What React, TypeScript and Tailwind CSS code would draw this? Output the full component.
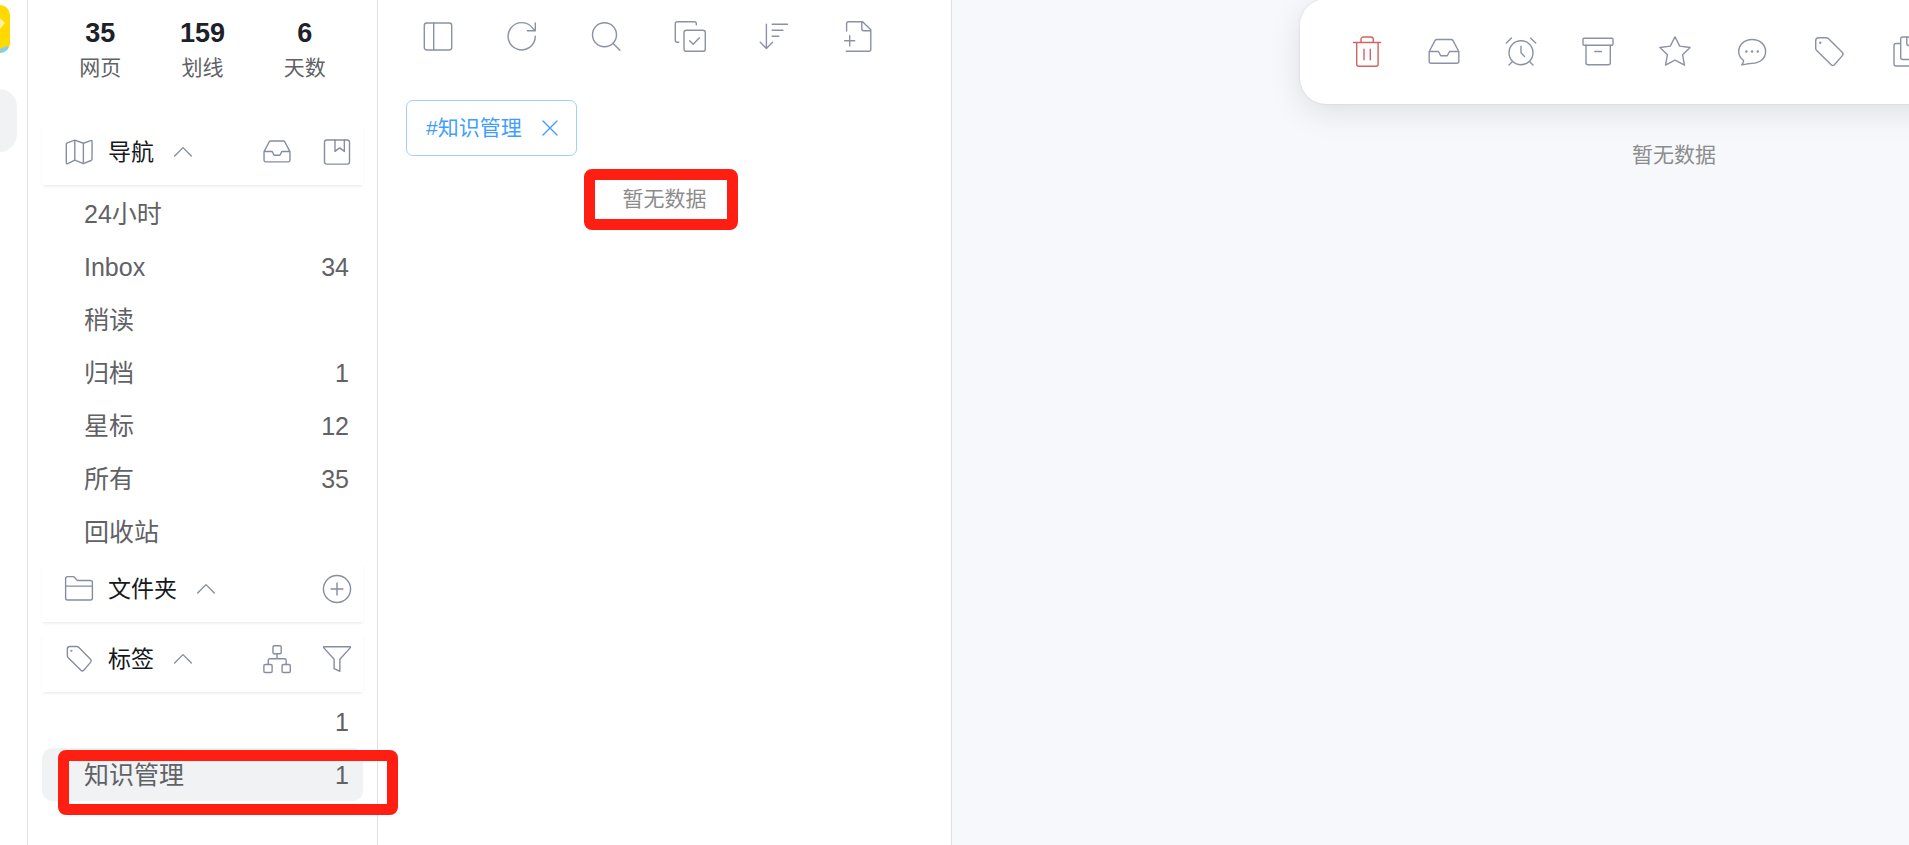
import type { ReactNode } from 'react'

interface NavItem {
  label: string
  count?: number
}

interface Action {
  label: string
  icon: ReactNode
}

const stats = [
  { value: 35, label: '网页' },
  { value: 159, label: '划线' },
  { value: 6, label: '天数' },
]

const navItems: NavItem[] = [
  { label: '24小时' },
  { label: 'Inbox', count: 34 },
  { label: '稍读' },
  { label: '归档', count: 1 },
  { label: '星标', count: 12 },
  { label: '所有', count: 35 },
  { label: '回收站' },
]

// Icon shapes, all drawn on a 32x32 grid
const inboxShape = (
  <path d="M1.2 15.5 7 4.6q.6-1.1 1.8-1.1h14.4q1.2 0 1.8 1.1l5.8 10.9v9.8q0 2-2 2H3.2q-2 0-2-2zh9.3l2.2 4.2h6.6l2.2-4.2h9.3" />
)

const tagShape = (
  <>
    <path d="M2.7 4.7q0-3 3-3h7.6q1.3 0 2.3 1l13.6 13.5q1.6 1.6.2 3.4l-8 9.2q-1.6 1.6-3.2 0L3.7 14.6q-1-1-1-2.3z" />
    <circle cx="7.3" cy="6.7" r="0.5" />
  </>
)

const listActions: Action[] = [
  {
    label: '侧边栏',
    icon: (
      <>
        <rect x="2.3" y="3" width="27.4" height="27" rx="2.4" />
        <path d="M11.7 3v27" />
      </>
    ),
  },
  {
    label: '刷新',
    icon: <path d="M29.3 16.3A13.6 13.6 0 1 1 27 8.7l2.3 2M29.3 3v7.7h-8" />,
  },
  {
    label: '搜索',
    icon: (
      <>
        <circle cx="14.5" cy="14.8" r="12" />
        <path d="m22.9 23.3 7 7" />
      </>
    ),
  },
  {
    label: '多选',
    icon: (
      <>
        <path d="M22.3 4.8V3.7q0-2-2-2h-17q-2 0-2 2v16.6q0 2 2 2h1.4" />
        <rect x="10" y="10.3" width="21.3" height="21" rx="2.4" />
        <path d="m15.7 20.7 3.5 3.5 6.2-6.5" />
      </>
    ),
  },
  {
    label: '排序',
    icon: <path d="M8.4 4.3v24.2M2.3 22.3l6.1 6.2 6.2-6.2M14.2 4.3h15.2M14.2 10.3H25M14.2 16.3h6.6" />,
  },
  {
    label: '新建',
    icon: (
      <path d="M4.6 11V3.7q0-2 2-2h14l8.2 8v19.6q0 2-2 2H4.3M19.8 1.7v7q0 2 2 2h7M7.7 15.7v10M2.7 20.7h10" />
    ),
  },
]

const articleActions: Action[] = [
  {
    label: '删除',
    icon: (
      <path d="M2.5 6.5h27M10 6.5v-3q0-2.5 2.5-2.5h7.4q2.4 0 2.4 2.5v3M5.7 6.5v21.8q0 2 2 2h17.4q2 0 2-2V6.5M13 13.3v10.5M19.3 13.3v10.5" />
    ),
  },
  { label: '收件箱', icon: inboxShape },
  {
    label: '稍后提醒',
    icon: (
      <>
        <circle cx="16" cy="16.7" r="12" />
        <path d="M16 10.3v6.5l3.5 3.6M1.3 7l5.2-5M30.7 7l-5.2-5M7.5 25.5 4 29M24.5 25.5 28 29" />
      </>
    ),
  },
  {
    label: '归档',
    icon: (
      <>
        <rect x="1" y="2.3" width="30" height="7" rx="1" />
        <path d="M4 9.3v17.4q0 2 2 2h20.3q2 0 2-2V9.3M12.8 15.5h6.6" />
      </>
    ),
  },
  {
    label: '星标',
    icon: (
      <path d="m16 .8 4.7 9.3 10.4 1.4-7.5 7.3 1.9 10.3L16 24.2l-9.5 4.9 1.9-10.3L.9 11.5l10.4-1.4z" />
    ),
  },
  {
    label: '评论',
    icon: (
      <>
        <path d="M7.6 24.4C4.5 22.3 2.7 19 2.7 15.5c0-7 6-12 13.5-12s13.4 5 13.4 12-6 11.9-13.4 11.9c-2 0-3 0-4.5.4-2 .6-3.8.8-6 .9q1.9-2 1.9-4.3z" />
        <g fill="currentColor" stroke="none">
          <circle cx="10.4" cy="15.5" r="1.2" />
          <circle cx="16.1" cy="15.5" r="1.2" />
          <circle cx="21.8" cy="15.5" r="1.2" />
        </g>
      </>
    ),
  },
  { label: '标签', icon: tagShape },
  {
    label: '复制',
    icon: (
      <path d="M10.7 7.5H6q-2 0-2 2V28q0 2 2 2h14q2 0 2-2v-4.5M12.7 1h5.5l9.8 8.5v12q0 2-2 2H12.7q-2 0-2-2V3q0-2 2-2zM16.8 1v6.5q0 2 2 2H28" />
    ),
  },
]

const navActions: Action[] = [
  { label: '收件箱', icon: inboxShape },
  {
    label: '书签',
    icon: (
      <>
        <rect x="1.7" y="2.3" width="28.6" height="27.5" rx="2.6" />
        <path d="M13.7 2.3v13l5.4-4 5.3 4v-13" />
      </>
    ),
  },
]

const folderActions: Action[] = [
  {
    label: '新建文件夹',
    icon: (
      <>
        <circle cx="16" cy="16" r="15.5" />
        <path d="M16 9.2v13.6M9.2 16h13.6" />
      </>
    ),
  },
]

const tagActions: Action[] = [
  {
    label: '层级',
    icon: (
      <>
        <rect x="11.4" y="0.8" width="9.4" height="9.2" rx="1.5" />
        <rect x="1" y="22.2" width="9.4" height="9.2" rx="1.5" />
        <rect x="21.8" y="22.2" width="9.4" height="9.2" rx="1.5" />
        <path d="M16 10v5.7M6 22.2v-4.5q0-2 2-2h16.5q2 0 2 2v4.5" />
      </>
    ),
  },
  {
    label: '筛选',
    icon: <path d="M.7 2h30.6v1L19.3 16.3V30l-6.6-3V16.3L.7 3z" />,
  },
]

const mapShape = (
  <path d="M11.2 2.5 2.6 5.6Q1.5 6 1.5 7.2v21q0 1.6 1.6 1.1l8.1-4 9.8 3.9 8.8-3.5q1.1-.4 1.1-1.6V4q0-1.5-1.5-1L21 6zv22.8M21 6v23.2" />
)

const folderShape = (
  <path d="M.7 4q0-2.2 2.2-2.2h6.2q1 0 1.7.8l2.6 3q.6.6 1.5.6h14q2.4 0 2.4 2.2v18q0 2.2-2.2 2.2H2.9q-2.2 0-2.2-2.2zM.7 12.7h30.6" />
)

function Icon({ small, children }: { small?: boolean; children: ReactNode }) {
  return (
    <svg
      viewBox="0 0 32 32"
      className={`shrink-0 overflow-visible ${small ? 'size-7' : 'size-8'}`}
      fill="none"
      stroke="currentColor"
      strokeWidth={small ? 1.6 : 1.4}
      strokeLinecap="round"
      strokeLinejoin="round"
      aria-hidden="true"
    >
      {children}
    </svg>
  )
}

function SectionHeader({ title, icon, actions }: { title: string; icon: ReactNode; actions: Action[] }) {
  return (
    <div className="flex h-[60px] items-center justify-between pr-3 pb-[6px] pl-[23px] text-[#868da2] shadow-[0_2px_3px_-1px_rgba(0,0,0,0.1)]">
      <button type="button" className="flex items-center gap-[15px]">
        <Icon small>{icon}</Icon>
        <span className="text-[23px] leading-8 text-[#15181d]">{title}</span>
        <Icon small>
          <path d="M6.5 20.5 16 11l9.5 9.5" />
        </Icon>
      </button>
      <div className="flex gap-8">
        {actions.map((action) => (
          <button key={action.label} type="button" aria-label={action.label}>
            <Icon small>{action.icon}</Icon>
          </button>
        ))}
      </div>
    </div>
  )
}

function NavRow({ item, active }: { item: NavItem; active?: boolean }) {
  return (
    <button
      type="button"
      className={`flex h-[53px] w-full items-center justify-between rounded-[10px] pr-[14px] pl-[42px] text-[25px] leading-8 text-[#606266] ${
        active ? 'bg-[#f1f2f4]' : ''
      }`}
    >
      <span>{item.label}</span>
      <span>{item.count}</span>
    </button>
  )
}

function Rail() {
  return (
    <aside className="flex w-7 shrink-0 flex-col items-end overflow-hidden border-r border-[#dfe0e3]">
      <svg viewBox="0 0 48 48" className="mt-[5px] mr-[17px] size-12 shrink-0" aria-hidden="true">
        <clipPath id="logo-clip">
          <rect width="48" height="48" rx="10" />
        </clipPath>
        <g clipPath="url(#logo-clip)">
          <rect width="48" height="48" fill="#ffd900" />
          <path d="M24 6 38 13 43 18 38 24 24 30z" fill="#fff0a3" />
          <path d="M24 46 38 44 45 41 48 44v4H24z" fill="#7fd0ee" />
        </g>
      </svg>
      <button
        type="button"
        aria-label="主页"
        className="mt-9 mr-[10px] h-[63px] w-16 shrink-0 rounded-[18px] bg-[#f1f2f4]"
      />
    </aside>
  )
}

function Sidebar() {
  return (
    <nav className="w-[350px] shrink-0 border-r border-[#dfe0e3] px-[14px] pt-4">
      <dl className="grid grid-cols-3 px-[7px] text-center">
        {stats.map((stat) => (
          <div key={stat.label} className="flex flex-col-reverse">
            <dt className="text-[21px] leading-9 text-[#606266]">{stat.label}</dt>
            <dd className="text-[27px] leading-[34px] font-bold text-[#1d2129]">{stat.value}</dd>
          </div>
        ))}
      </dl>

      {/* Navigation */}
      <section className="mt-[39px]">
        <SectionHeader title="导航" icon={mapShape} actions={navActions} />
        <div className="pt-[2px] pb-1">
          {navItems.map((item) => (
            <NavRow key={item.label} item={item} />
          ))}
        </div>
      </section>

      {/* Folders */}
      <SectionHeader title="文件夹" icon={folderShape} actions={folderActions} />

      {/* Tags */}
      <section className="mt-[10px]">
        <SectionHeader title="标签" icon={tagShape} actions={tagActions} />
        <div className="pt-[3px]">
          <NavRow item={{ label: '', count: 1 }} />
          <div className="relative">
            <NavRow item={{ label: '知识管理', count: 1 }} active />
            <div className="pointer-events-none absolute top-[2px] -right-[35px] left-4 h-[65px] rounded-lg border-11 border-[#ff1f12]" />
          </div>
        </div>
      </section>
    </nav>
  )
}

function PageList() {
  return (
    <section className="w-[574px] shrink-0 border-r border-[#dfe0e3] pt-5">
      <div className="flex gap-[52px] pl-11 text-[#8b91a6]">
        {listActions.map((action) => (
          <button key={action.label} type="button" aria-label={action.label}>
            <Icon>{action.icon}</Icon>
          </button>
        ))}
      </div>

      <div className="mt-12 flex pl-7">
        <span className="flex h-14 items-center gap-5 rounded-[7px] border border-[#9fceff] pr-[18px] pl-[19px] text-[21px] leading-8 text-[#409eff]">
          #知识管理
          <button type="button" aria-label="移除标签">
            <svg
              viewBox="0 0 16 16"
              className="size-4"
              fill="none"
              stroke="currentColor"
              strokeWidth="1.4"
              strokeLinecap="round"
            >
              <path d="m1 1 14 14M15 1 1 15" />
            </svg>
          </button>
        </span>
      </div>

      <div className="relative mt-[27px] text-center">
        <p className="text-[21px] leading-8 text-[#8c8c8c]">暂无数据</p>
        <div className="pointer-events-none absolute -top-[14px] left-[206px] h-[61px] w-[154px] rounded-lg border-11 border-[#ff1f12]" />
      </div>
    </section>
  )
}

function Reader() {
  return (
    <main className="flex-1 overflow-hidden bg-[#f6f8fc]">
      <div className="flex min-w-[1444px] flex-col items-center">
        <div className="-mt-px flex h-[105px] w-[748px] items-center gap-[45px] rounded-[26px] bg-white pl-[51px] text-[#8b91a6] shadow-[0_8px_32px_rgba(0,0,0,0.1),0_0_2px_rgba(0,0,0,0.15)]">
          {articleActions.map((action) => (
            <button
              key={action.label}
              type="button"
              aria-label={action.label}
              className={action.label === '删除' ? 'text-[#d4625e]' : ''}
            >
              <Icon>{action.icon}</Icon>
            </button>
          ))}
        </div>
        <p className="mt-[35px] text-[21px] leading-8 text-[#8c8c8c]">暂无数据</p>
      </div>
    </main>
  )
}

export default function App() {
  return (
    <div className="flex min-h-screen overflow-hidden bg-white font-['Liberation_Sans','Noto_Sans_CJK_SC',sans-serif]">
      <Rail />
      <Sidebar />
      <PageList />
      <Reader />
    </div>
  )
}
